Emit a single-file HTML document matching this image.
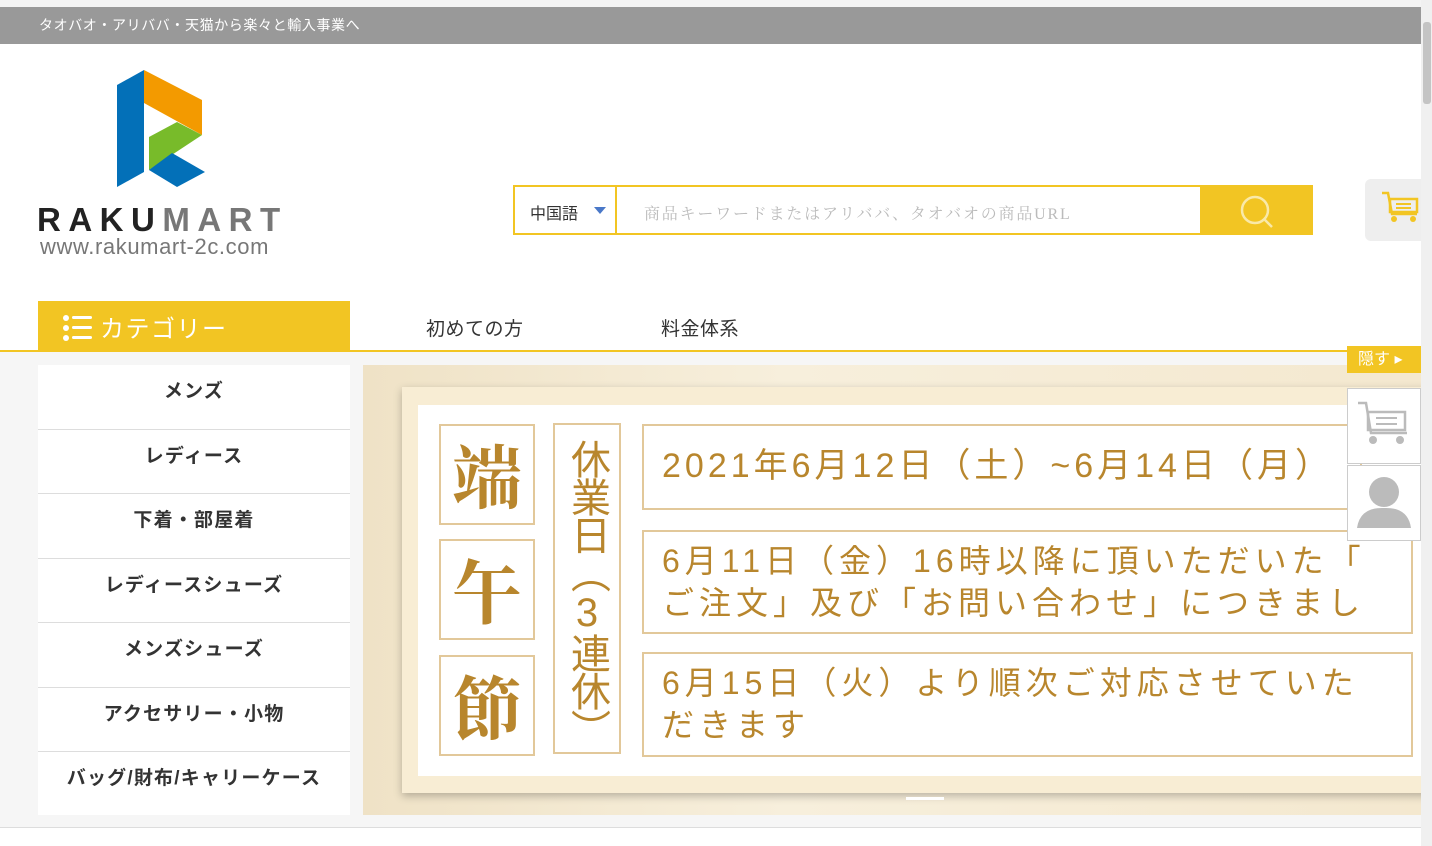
<!DOCTYPE html>
<html><head><meta charset="utf-8"><style>
*{margin:0;padding:0;box-sizing:border-box}
body{width:1432px;height:846px;overflow:hidden;background:#fff;font-family:"Liberation Sans","Noto Sans CJK JP",sans-serif;position:relative}
.a{position:absolute}
.g{color:#b8862d}
.bx{position:absolute;border:2px solid #e2c89a;background:#fff}
.menu div{height:64.5px;border-bottom:1px solid #ddd;text-align:center;line-height:54px;font-size:19px;letter-spacing:1.2px;font-weight:bold;color:#333}
</style></head><body>
<div class="a" style="left:0;top:0;width:1432px;height:7px;background:#f4f4f4"></div>
<div class="a" style="left:0;top:7px;width:1421px;height:37px;background:#999;color:#fff;font-size:14px;letter-spacing:0.6px;line-height:37px;padding-left:39px">タオバオ・アリババ・天猫から楽々と輸入事業へ</div>
<div class="a" style="left:1421px;top:0;width:11px;height:846px;background:#f0f0f0"></div>
<div class="a" style="left:1423px;top:22px;width:8px;height:82px;background:#c4c4c4;border-radius:3px"></div>
<svg class="a" style="left:116px;top:69px" width="92" height="120" viewBox="0 0 92 120">
<polygon points="1,16 28,1 28,103 1,118" fill="#0370b8"/>
<polygon points="28,1 86,31 86,66 28,34" fill="#f39a00"/>
<polygon points="33,68 61,53 86,66 33,101" fill="#78bb2a"/>
<polygon points="33,101 56,84 89,103 61,118" fill="#0370b8"/>
</svg>
<div class="a" style="left:37px;top:202px;font-size:33px;font-weight:bold;letter-spacing:7.5px;color:#222;line-height:36px">RAKU<span style="color:#777">MART</span></div>
<div class="a" style="left:40px;top:234px;font-size:22px;letter-spacing:0.6px;color:#777;line-height:26px">www.rakumart-2c.com</div>
<div class="a" style="left:513px;top:185px;width:800px;height:50px;border:2px solid #f2c523;background:#fff"></div>
<div class="a" style="left:530px;top:200px;font-size:16px;color:#333">中国語</div>
<div class="a" style="left:594px;top:207px;width:0;height:0;border-left:6px solid transparent;border-right:6px solid transparent;border-top:7px solid #4a78c8"></div>
<div class="a" style="left:615px;top:187px;width:2px;height:46px;background:#f2c523"></div>
<div class="a" style="left:644px;top:201px;font-size:16px;letter-spacing:1.8px;color:#bbb;font-family:'Liberation Serif','Noto Serif CJK SC',serif">商品キーワードまたはアリババ、タオバオの商品URL</div>
<div class="a" style="left:1200px;top:185px;width:113px;height:50px;background:#f2c523"></div>
<svg class="a" style="left:1238px;top:193px" width="40" height="40"><circle cx="17" cy="17" r="13" fill="none" stroke="#f9e9a8" stroke-width="2.5"/><line x1="26" y1="26" x2="34" y2="34" stroke="#f9e9a8" stroke-width="2.5"/></svg>
<div class="a" style="left:1365px;top:179px;width:56px;height:62px;background:#eee;border-radius:6px 0 0 6px"></div>
<svg class="a" style="left:1380px;top:190px" width="40" height="36"><path d="M2 3h6l4 21h25" fill="none" stroke="#f2c523" stroke-width="2.5"/><rect x="10" y="9" width="27" height="13" fill="none" stroke="#f2c523" stroke-width="2.5"/><line x1="16" y1="14" x2="31" y2="14" stroke="#f2c523" stroke-width="2"/><line x1="16" y1="18" x2="31" y2="18" stroke="#f2c523" stroke-width="2"/><circle cx="14" cy="29" r="3" fill="#f2c523"/><circle cx="33" cy="29" r="3" fill="#f2c523"/></svg>
<div class="a" style="left:38px;top:301px;width:312px;height:49px;background:#f2c523"></div>
<svg class="a" style="left:63px;top:314px" width="30" height="28" fill="#fff"><circle cx="3" cy="4" r="3"/><circle cx="3" cy="14" r="3"/><circle cx="3" cy="24" r="3"/><rect x="9" y="2" width="20" height="3" rx="1.5"/><rect x="9" y="12" width="20" height="3" rx="1.5"/><rect x="9" y="22" width="20" height="3" rx="1.5"/></svg>
<div class="a" style="left:100px;top:309px;font-size:24px;color:#fff;letter-spacing:1.5px">カテゴリー</div>
<div class="a" style="left:426px;top:314px;font-size:19px;letter-spacing:0.5px;color:#333">初めての方</div>
<div class="a" style="left:661px;top:314px;font-size:19px;letter-spacing:0.5px;color:#333">料金体系</div>
<div class="a" style="left:0;top:350px;width:1421px;height:478px;background:#f6f6f6;border-top:2px solid #f2c523;border-bottom:1px solid #ddd"></div>
<div class="a menu" style="left:38px;top:365px;width:312px;height:450px;background:#fff">
<div>メンズ</div><div>レディース</div><div>下着・部屋着</div><div>レディースシューズ</div><div>メンズシューズ</div><div>アクセサリー・小物</div><div style="border:none">バッグ/財布/キャリーケース</div></div>
<div class="a" style="left:363px;top:365px;width:1058px;height:450px;background:linear-gradient(90deg,#efe2c6,#f7efdc 40%,#f4e8cf);overflow:hidden">
<div class="a" style="left:39px;top:22px;width:1030px;height:406px;background:#f8edd4;box-shadow:0 3px 8px rgba(0,0,0,.25)"></div>
<div class="a" style="left:55px;top:40px;width:1010px;height:371px;background:#fff"></div>
<div class="bx g" style="left:76px;top:59px;width:96px;height:101px;font-size:70px;text-align:center;line-height:96px;font-family:'Noto Serif CJK SC',serif;font-weight:bold">端</div>
<div class="bx g" style="left:76px;top:174px;width:96px;height:101px;font-size:70px;text-align:center;line-height:96px;font-family:'Noto Serif CJK SC',serif;font-weight:bold">午</div>
<div class="bx g" style="left:76px;top:290px;width:96px;height:101px;font-size:70px;text-align:center;line-height:96px;font-family:'Noto Serif CJK SC',serif;font-weight:bold">節</div>
<div class="bx g" style="left:190px;top:58px;width:68px;height:331px;font-size:40px;writing-mode:vertical-rl;text-orientation:upright;text-align:center;line-height:64px;padding-top:8px;letter-spacing:-2px">休業日（3連休）</div>
<div class="bx g" style="left:279px;top:59px;width:720px;height:86px;font-size:34px;line-height:80px;padding-left:18px;letter-spacing:4px;white-space:nowrap">2021年6月12日（土）~6月14日（月）</div>
<div class="bx g" style="left:279px;top:165px;width:771px;height:104px;font-size:32px;line-height:42px;padding:8px 0 0 18px;letter-spacing:5px;white-space:nowrap">6月11日（金）16時以降に頂いただいた「<br>ご注文」及び「お問い合わせ」につきまし</div>
<div class="bx g" style="left:279px;top:287px;width:771px;height:105px;font-size:32px;line-height:42px;padding:8px 0 0 18px;letter-spacing:5px;white-space:nowrap">6月15日（火）より順次ご対応させていた<br>だきます</div>
<div class="a" style="left:543px;top:432px;width:38px;height:3px;background:#fff"></div>
</div>
<div class="a" style="left:1347px;top:346px;width:74px;height:27px;background:#f2c523;color:#fff;font-size:16px;line-height:27px;padding-left:11px">隠す ▸</div>
<div class="a" style="left:1347px;top:388px;width:74px;height:76px;background:#fff;border:1px solid #ccc"></div>
<svg class="a" style="left:1356px;top:400px" width="56" height="50"><path d="M2 3h8l5 30h36" fill="none" stroke="#bbb" stroke-width="2.5"/><rect x="12" y="12" width="37" height="18" fill="none" stroke="#bbb" stroke-width="2.5"/><line x1="20" y1="18" x2="41" y2="18" stroke="#bbb" stroke-width="2"/><line x1="20" y1="24" x2="41" y2="24" stroke="#bbb" stroke-width="2"/><circle cx="17" cy="40" r="4" fill="#bbb"/><circle cx="44" cy="40" r="4" fill="#bbb"/></svg>
<div class="a" style="left:1347px;top:465px;width:74px;height:76px;background:#fff;border:1px solid #ccc"></div>
<svg class="a" style="left:1356px;top:474px" width="56" height="56"><circle cx="28" cy="18" r="15" fill="#bbb"/><path d="M1 54 Q4 33 28 34 Q52 33 55 54Z" fill="#bbb"/></svg>
</body></html>
